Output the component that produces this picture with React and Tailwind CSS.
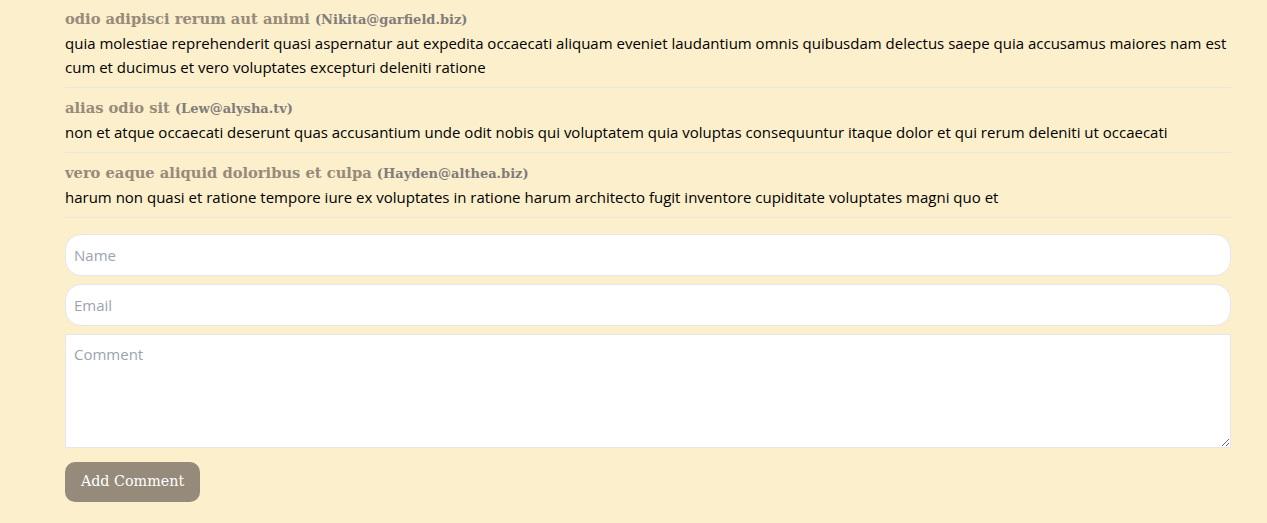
const comments = [
  {
    name: "odio adipisci rerum aut animi",
    email: "Nikita@garfield.biz",
    body: "quia molestiae reprehenderit quasi aspernatur aut expedita occaecati aliquam eveniet laudantium omnis quibusdam delectus saepe quia accusamus maiores nam est cum et ducimus et vero voluptates excepturi deleniti ratione",
  },
  {
    name: "alias odio sit",
    email: "Lew@alysha.tv",
    body: "non et atque occaecati deserunt quas accusantium unde odit nobis qui voluptatem quia voluptas consequuntur itaque dolor et qui rerum deleniti ut occaecati",
  },
  {
    name: "vero eaque aliquid doloribus et culpa",
    email: "Hayden@althea.biz",
    body: "harum non quasi et ratione tempore iure ex voluptates in ratione harum architecto fugit inventore cupiditate voluptates magni quo et",
  },
];

export default function App() {
  return (
    <main className="min-h-screen bg-[#fcefcc] font-['Open_Sans',sans-serif] text-black">
      <div className="mx-[65px] w-[1166px]">
        {comments.map((c) => (
          <div key={c.email} className="border-b border-[#e8e6e0] pt-2 pb-2 first:pt-[7px]">
            <div className="h-6 overflow-hidden whitespace-nowrap font-['DejaVu_Serif',serif] text-[14.7px] font-bold leading-6 text-[#968a7a]">
              {c.name}{" "}
              <span className="text-[13px] leading-none text-[#807c7a]">({c.email})</span>
            </div>
            <p className="text-[15px] leading-6">{c.body}</p>
          </div>
        ))}

        <form className="mt-4 flex flex-col" onSubmit={(e) => e.preventDefault()}>
          <input
            type="text"
            placeholder="Name"
            className="mb-2 h-[42px] rounded-2xl border border-[#e5e7eb] bg-white px-2 text-[15px] placeholder:text-[#9ca3af] outline-none"
          />
          <input
            type="email"
            placeholder="Email"
            className="mb-2 h-[42px] rounded-2xl border border-[#e5e7eb] bg-white px-2 text-[15px] placeholder:text-[#9ca3af] outline-none"
          />
          <textarea
            placeholder="Comment"
            className="h-[114px] border border-[#e5e7eb] bg-white px-2 py-2 text-[15px] placeholder:text-[#9ca3af] outline-none"
          />
          <div className="mt-[14px]">
            <button
              type="submit"
              className="h-10 w-[135px] rounded-[10px] bg-[#968a7a] font-['DejaVu_Serif',serif] text-[14.3px] text-white"
            >
              Add Comment
            </button>
          </div>
        </form>
      </div>
    </main>
  );
}
